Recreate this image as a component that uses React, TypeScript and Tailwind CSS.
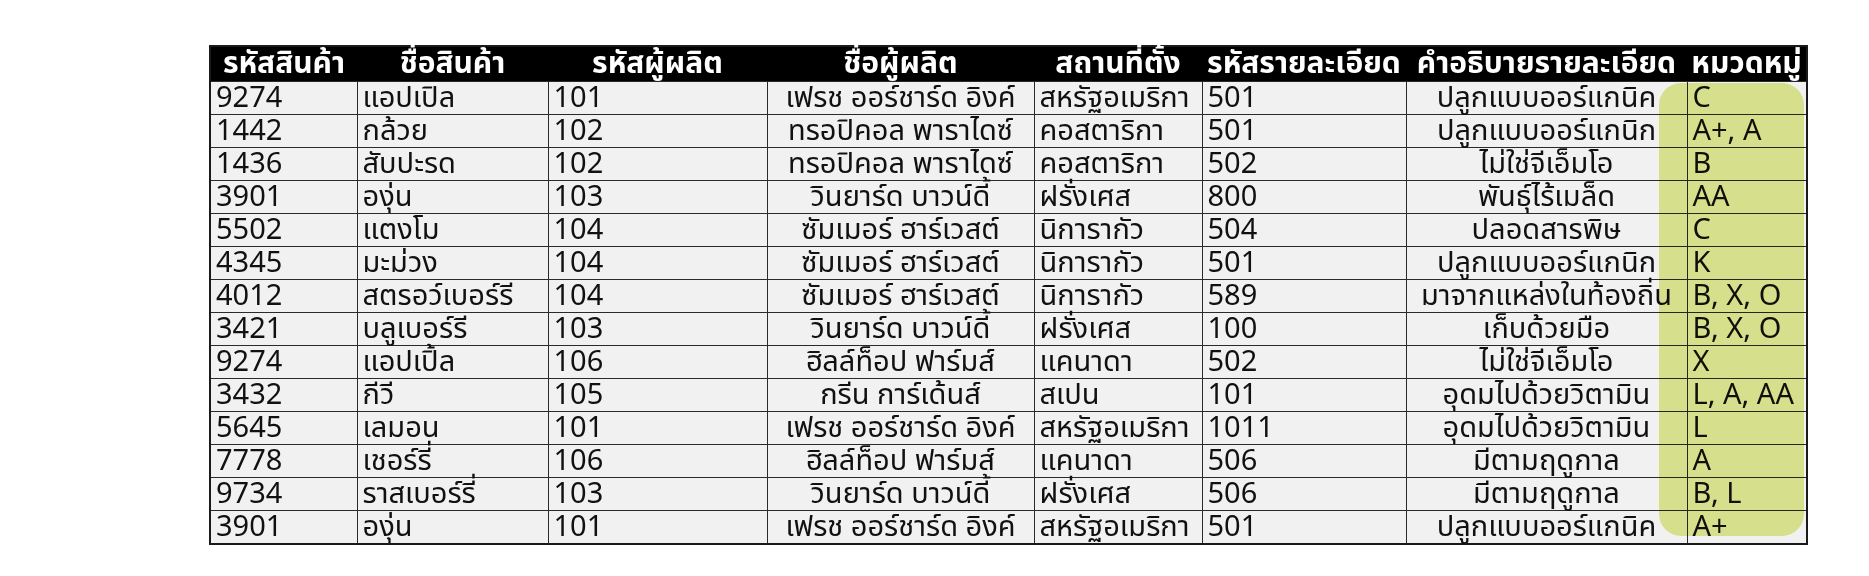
import React from 'react';

const headers = [
  'รหัสสินค้า',
  'ชื่อสินค้า',
  'รหัสผู้ผลิต',
  'ชื่อผู้ผลิต',
  'สถานที่ตั้ง',
  'รหัสรายละเอียด',
  'คำอธิบายรายละเอียด',
  'หมวดหมู่',
];

const widths = ['w-[147px]', 'w-[191px]', 'w-[219px]', 'w-[267px]', 'w-[168px]', 'w-[204px]', 'w-[281px]', 'w-[120px]'];

const rows: string[][] = [
  ['9274', 'แอปเปิล', '101', 'เฟรช ออร์ชาร์ด อิงค์', 'สหรัฐอเมริกา', '501', 'ปลูกแบบออร์แกนิค', 'C'],
  ['1442', 'กล้วย', '102', 'ทรอปิคอล พาราไดซ์', 'คอสตาริกา', '501', 'ปลูกแบบออร์แกนิก', 'A+, A'],
  ['1436', 'สับปะรด', '102', 'ทรอปิคอล พาราไดซ์', 'คอสตาริกา', '502', 'ไม่ใช่จีเอ็มโอ', 'B'],
  ['3901', 'องุ่น', '103', 'วินยาร์ด บาวน์ดี้', 'ฝรั่งเศส', '800', 'พันธุ์ไร้เมล็ด', 'AA'],
  ['5502', 'แตงโม', '104', 'ซัมเมอร์ ฮาร์เวสต์', 'นิการากัว', '504', 'ปลอดสารพิษ', 'C'],
  ['4345', 'มะม่วง', '104', 'ซัมเมอร์ ฮาร์เวสต์', 'นิการากัว', '501', 'ปลูกแบบออร์แกนิก', 'K'],
  ['4012', 'สตรอว์เบอร์รี', '104', 'ซัมเมอร์ ฮาร์เวสต์', 'นิการากัว', '589', 'มาจากแหล่งในท้องถิ่น', 'B, X, O'],
  ['3421', 'บลูเบอร์รี', '103', 'วินยาร์ด บาวน์ดี้', 'ฝรั่งเศส', '100', 'เก็บด้วยมือ', 'B, X, O'],
  ['9274', 'แอปเปิ้ล', '106', 'ฮิลล์ท็อป ฟาร์มส์', 'แคนาดา', '502', 'ไม่ใช่จีเอ็มโอ', 'X'],
  ['3432', 'กีวี', '105', 'กรีน การ์เด้นส์', 'สเปน', '101', 'อุดมไปด้วยวิตามิน', 'L, A, AA'],
  ['5645', 'เลมอน', '101', 'เฟรช ออร์ชาร์ด อิงค์', 'สหรัฐอเมริกา', '1011', 'อุดมไปด้วยวิตามิน', 'L'],
  ['7778', 'เชอร์รี่', '106', 'ฮิลล์ท็อป ฟาร์มส์', 'แคนาดา', '506', 'มีตามฤดูกาล', 'A'],
  ['9734', 'ราสเบอร์รี่', '103', 'วินยาร์ด บาวน์ดี้', 'ฝรั่งเศส', '506', 'มีตามฤดูกาล', 'B, L'],
  ['3901', 'องุ่น', '101', 'เฟรช ออร์ชาร์ด อิงค์', 'สหรัฐอเมริกา', '501', 'ปลูกแบบออร์แกนิค', 'A+'],
];

// columns 4 and 7 are centered, the rest sit on the left
const centered = [false, false, false, true, false, false, true, false];

export default function App() {
  return (
    <div
      className="w-[1869px] h-[576px] bg-white pt-[45px] pl-[209px] overflow-hidden"
      style={{ fontFamily: 'Tahoma, "Noto Sans Thai", "Noto Sans", "DejaVu Sans", sans-serif' }}
    >
      <div className="relative w-[1597px]">
        <table className="table-fixed border-collapse w-[1597px] border-2 border-[#1a1a1a]">
          <colgroup>
            {widths.map((w, i) => (
              <col key={i} className={w} />
            ))}
          </colgroup>
          <thead>
            <tr className="bg-black">
              {headers.map((h) => (
                <th
                  key={h}
                  className="h-[34px] p-0 text-center align-bottom text-white font-bold text-[30px] leading-[34px] whitespace-nowrap overflow-visible"
                >
                  {h}
                </th>
              ))}
            </tr>
          </thead>
          <tbody>
            {rows.map((r, ri) => (
              <tr key={ri} className="bg-[#f1f1f1]">
                {r.map((c, ci) => (
                  <td
                    key={ci}
                    className={`h-[33px] p-0 border border-[#2a2a2a] align-bottom text-[29px] leading-[32px] text-[#111] whitespace-nowrap overflow-visible ${
                      centered[ci] ? 'text-center' : 'text-left pl-[5px]'
                    }`}
                  >
                    {c}
                  </td>
                ))}
              </tr>
            ))}
          </tbody>
        </table>
        {/* lime highlight over the category column */}
        <div className="absolute left-[1450px] top-[38px] w-[145px] h-[453px] rounded-[22px] bg-[#e3ed94] mix-blend-multiply pointer-events-none" />
      </div>
    </div>
  );
}
